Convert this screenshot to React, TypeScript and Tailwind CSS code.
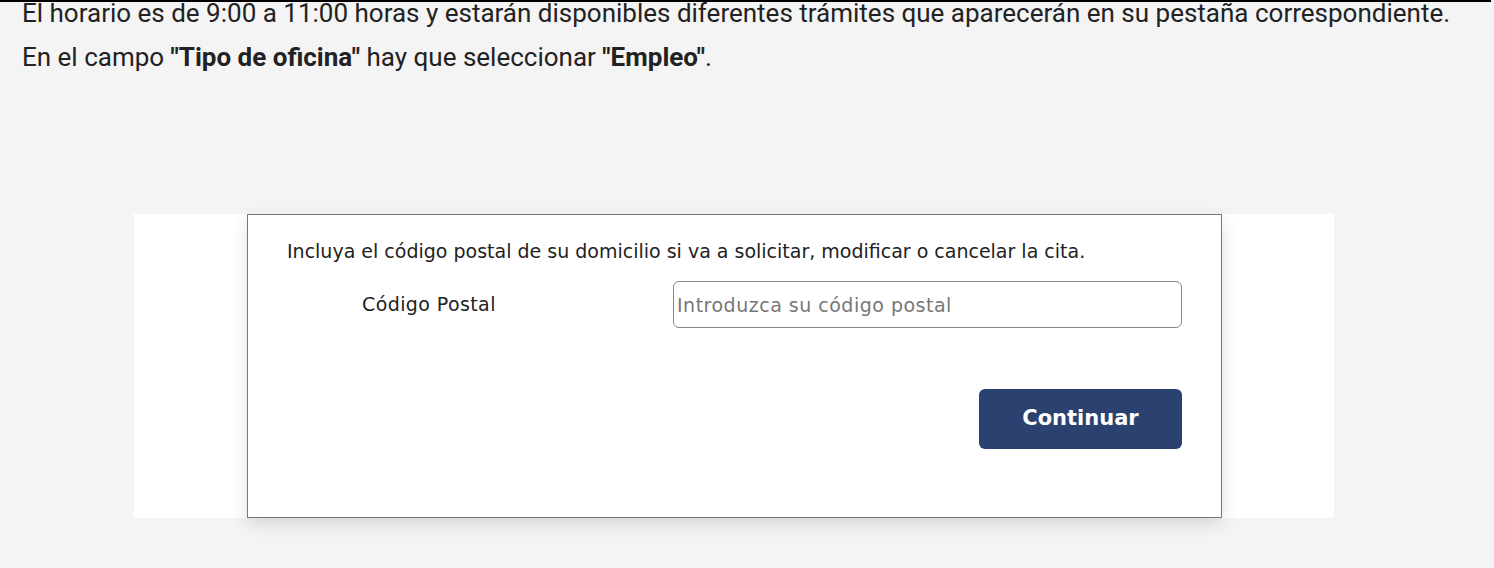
export default function App() {
  return (
    <div className="h-[568px] overflow-hidden bg-[#f4f4f4] font-['Roboto',sans-serif]">
      <div className="h-[2px] w-[1491px] bg-black" />
      <div className="px-[22px] -mt-[11px] text-[26px] leading-[44px] text-[#222]">
        <p>El horario es de 9:00 a 11:00 horas y estarán disponibles diferentes trámites que aparecerán en su pestaña correspondiente.</p>
        <p>
          En el campo <b>"Tipo de oficina"</b> hay que seleccionar <b>"Empleo"</b>.
        </p>
      </div>
      <div className="mt-[135px] ml-[134px] flex h-[304px] w-[1200px] bg-white">
        <div className="ml-[113px] h-full w-[975px] border border-[#777] bg-white pl-[39px] pr-[39px] pt-[24px] font-['DejaVu_Sans',sans-serif] text-[#222] shadow-[0_6px_16px_rgba(0,0,0,0.12)]">
          <p className="text-[19px] leading-[24px]">
            Incluya el código postal de su domicilio si va a solicitar, modificar o cancelar la cita.
          </p>
          <div className="mt-[18px] flex items-center">
            <label className="ml-[75px] w-[311px] text-[19px] tracking-[0.4px]">Código Postal</label>
            <input
              className="h-[47px] flex-1 rounded-[6px] border border-[#888] bg-white px-[3px] text-[19px] tracking-[0.5px] text-[#222] outline-none placeholder:text-[#777]"
              placeholder="Introduzca su código postal"
            />
          </div>
          <div className="mt-[61px] flex justify-end">
            <button className="h-[60px] w-[203px] rounded-[6px] bg-[#2b4270] text-[21px] font-bold text-white">
              Continuar
            </button>
          </div>
        </div>
      </div>
    </div>
  );
}
